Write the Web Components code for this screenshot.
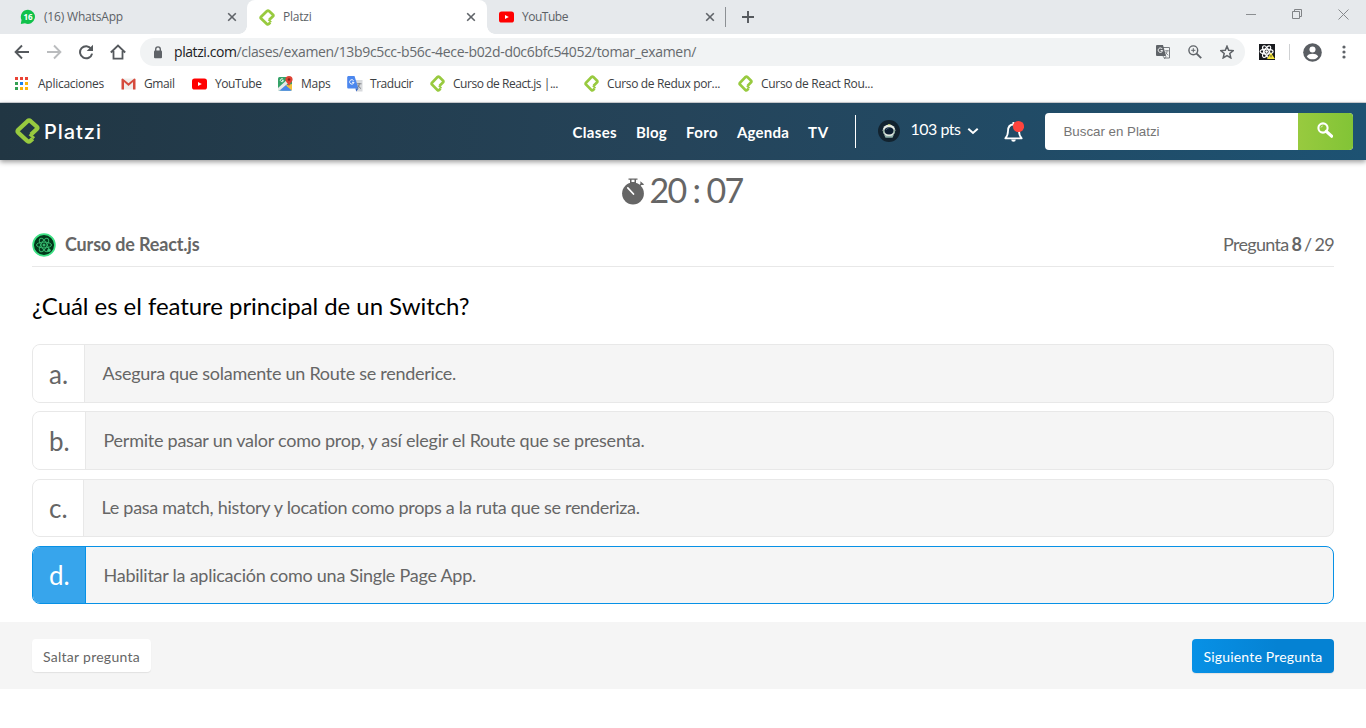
<!DOCTYPE html>
<html lang="es"><head><meta charset="utf-8"><title>Platzi</title>
<style>
body{margin:0;background:#fff;overflow:hidden;font-family:"Lato",sans-serif}
</style></head><body>
<exam-page></exam-page>
<script>
const make=(name,html,setup)=>customElements.define(name,class extends HTMLElement{
  connectedCallback(){
    if(this.shadowRoot)return;
    const t=document.createElement('template');t.innerHTML=html;
    this.attachShadow({mode:'open'}).append(t.content.cloneNode(true));
    if(setup)setup(this,this.shadowRoot);
  }
});

/* Single line label whose tracking is tuned to a given width */
make('fit-text',`<style>:host{display:block;white-space:nowrap;flex:none}span{display:inline-block}</style><span><slot></slot></span>`,(el,r)=>{
  const s=r.querySelector('span'),w=+el.getAttribute('w');
  if(!w)return;
  const n=el.textContent.length,nat=s.getBoundingClientRect().width;
  s.style.letterSpacing=((w-nat)/n).toFixed(3)+'px';
  el.style.width=w+'px';
});

const atom=c=>`<g fill="none" stroke="${c}"><ellipse cx="12" cy="12" rx="7.5" ry="2.9"/><ellipse cx="12" cy="12" rx="7.5" ry="2.9" transform="rotate(60 12 12)"/><ellipse cx="12" cy="12" rx="7.5" ry="2.9" transform="rotate(120 12 12)"/></g><circle cx="12" cy="12" r="1.5" fill="${c}"/>`;
const ICONS={
  platzi:['0 0 24 26','<path d="M15.400 16.400L21 11Q22.100 9.900 21 8.800L15 3.200Q13.500 1.900 12 3.200L3.200 11.700Q1.900 13.200 3.200 14.700L11.800 22.900Q13.300 24.200 14.600 23L17 20.800" fill="none" stroke="#98ca3f" stroke-width="4.200" stroke-linejoin="round"/><path d="M14 16.200l4.400 4" stroke="#98ca3f" stroke-width="2.600"/>'],
  whatsapp:['0 0 16 16','<path d="M8 .7a7.1 7.1 0 1 1-3 13.6L.8 15.1 1.5 11A7.2 7.2 0 0 1 8 .7z" fill="#0fc14a"/><text x="8" y="11" font-family="Open Sans,sans-serif" font-weight="700" font-size="8" fill="#fff" text-anchor="middle">16</text>'],
  youtube:['0 0 15 12','<rect y=".5" width="15" height="11" rx="2.6" fill="#f00"/><path d="M6 3.9v4.2L9.8 6z" fill="#fff"/>'],
  close:['0 0 10 10','<path d="M1.2 1.2l7.6 7.6M8.8 1.2L1.2 8.8" stroke="#5f6368" stroke-width="1.6"/>'],
  plus:['0 0 12 12','<path d="M6 0v12M0 6h12" stroke="#55595d" stroke-width="1.9"/>'],
  back:['0 0 16 16','<path d="M15 8H2M8 1.5L1.6 8 8 14.5" fill="none" stroke="#55595d" stroke-width="1.9"/>'],
  fwd:['0 0 16 16','<path d="M1 8h13M8 1.5L14.4 8 8 14.5" fill="none" stroke="#babcbe" stroke-width="1.9"/>'],
  reload:['0 0 16 16','<path d="M13.2 4.8A6.1 6.1 0 1 0 14.1 9.6" fill="none" stroke="#55595d" stroke-width="2"/><path d="M15 .8v6.3H8.7z" fill="#55595d"/>'],
  home:['0 0 16 16','<path d="M.8 8.5L8 1.5l7.2 7M3.5 7v7.7h9V7" fill="none" stroke="#55595d" stroke-width="1.8"/>'],
  lock:['0 0 10 13','<rect x="1" y="4.6" width="8" height="7.6" rx="1" fill="#5f6368"/><path d="M2.7 5V3.2a2.3 2.3 0 0 1 4.6 0V5" fill="none" stroke="#5f6368" stroke-width="1.4"/>'],
  min:['0 0 10 10','<path d="M0 5.5h10" stroke="#8b8e91"/>'],
  max:['0 0 10 10','<path d="M.5 2.5h7v7h-7zM2.5 2.5v-2h7v7h-2" fill="none" stroke="#808386"/>'],
  x:['0 0 11 11','<path d="M.5.5l10 10M10.5.5L.5 10.5" stroke="#85888b"/>'],
  trgray:['0 0 14 14','<path d="M5.5 2.5h8v10.5H8" fill="none" stroke="#777b7f"/><path d="M1 0h6l3 11H1a1 1 0 0 1-1-1V1a1 1 0 0 1 1-1z" fill="#5f6368"/><path d="M6.3 4A2.2 2.2 0 1 0 6.6 5.6H4.6" fill="none" stroke="#fff"/><path d="M9 5.8h4M11 5v1c0 2-1 3.3-2 4M9.6 7c.6 1.500 1.500 2.500 2.700 3.200M7 11l1.600 2.700 1.600-2.700" fill="none" stroke="#777b7f" stroke-width=".8"/>'],
  zoom:['0 0 14 14','<circle cx="5.3" cy="5.300" r="4.400" fill="none" stroke="#5f6368" stroke-width="1.400"/><path d="M8.600 8.600l4.600 4.600" stroke="#5f6368" stroke-width="1.900"/><path d="M5.300 3.200v4.200M3.200 5.300h4.200" stroke="#5f6368"/>'],
  star:['0 0 14 14','<path d="M7 1.200l1.700 4 4.500.400-3.400 2.900 1 4.400L7 10.600l-3.800 2.300 1-4.400L.8 5.600l4.500-.400z" fill="none" stroke="#5f6368" stroke-width="1.500"/>'],
  reactext:['0 0 24 24','<rect width="24" height="24" fill="#191b1f"/><g transform="translate(-4.200 -4.200) scale(1.300)" stroke-width="1.300">'+atom('#fff')+'</g><path d="M18 13l6 9.500H12z" fill="#f5e53b"/><path d="M18 16.500v3.500" stroke="#333" stroke-width="1.200"/>'],
  user:['0 0 20 20','<circle cx="10" cy="10" r="9.800" fill="#5a5e63"/><circle cx="10" cy="6.900" r="3.200" fill="#fff"/><path d="M4 14.200c1-2.300 3.800-3 6-3s5 .700 6 3c-1.400 2-3.500 3-6 3s-4.600-1-6-3z" fill="#fff"/>'],
  dots:['0 0 4 14','<g fill="#5f6368"><circle cx="2" cy="2" r="1.600"/><circle cx="2" cy="7" r="1.600"/><circle cx="2" cy="12" r="1.600"/></g>'],
  apps:['0 0 13 13','<path d="M0 0h3v3H0zM5 0h3v3H5zM10 0h3v3h-3z" fill="#ea4335"/><path d="M0 5h3v3H0z" fill="#34a053"/><path d="M5 5h3v3H5z" fill="#1a82f0"/><path d="M10 5h3v3h-3zM5 10h3v3H5zM10 10h3v3h-3z" fill="#fbb40a"/><path d="M0 10h3v3H0z" fill="#34a053"/>'],
  gmail:['0 0 15 12','<path d="M1 .5h13v11H1z" fill="#f0eeec"/><path d="M.500 1v10.500h2.500V4L7.500 8l4.500-4v7.500h2.500V1L13.300.500 7.500 5.200 1.700.500z" fill="#d54b3d"/>'],
  maps:['0 0 15 15','<rect y="1" width="14" height="13.500" rx="1.500" fill="#35a268"/><path d="M1 14.500L8 7.500l6 6.500-1 .500z" fill="#4a86e8"/><path d="M0 12L12 1h2v3L1.500 14.500 0 14z" fill="#e8e9e8"/><path d="M7.500 9.500l6.500 5V8z" fill="#f2c13c"/><path d="M3 14.500l5-5 5 5z" fill="#4a86e8"/><path d="M5.200 3.400A1.500 1.500 0 1 0 5.400 4.600H4" fill="none" stroke="#fff" stroke-width=".900"/><path d="M11 0a3.600 3.600 0 0 1 3.600 3.600C14.600 6 12 7 11 10.500 10 7 7.400 6 7.400 3.600A3.600 3.600 0 0 1 11 0z" fill="#e04335"/><circle cx="11" cy="3.500" r="1.300" fill="#8e2018"/>'],
  translate:['0 0 16 16','<path d="M7 4h8.500v11.500H9z" fill="#d8dadd"/><path d="M1 0h6.500l4 12.500H1.200a1 1 0 0 1-1-1V1z" fill="#4c87ee"/><path d="M6.600 4.600A2.200 2.200 0 1 0 7 6.300H5" fill="none" stroke="#fff"/><path d="M8.500 12.500h3L9.300 15.500z" fill="#3264c8"/><path d="M10 7.800h4.500M12.200 7v1c0 2-.700 3.300-2 4.300M11 9c.500 1.500 1.500 2.800 3 3.500" fill="none" stroke="#777b80" stroke-width=".900"/>'],
  avatar:['0 0 22 22','<circle cx="11" cy="11" r="11" fill="#12232f"/><path d="M6 14.500h10l-1.500 3.300h-7z" fill="#8fb0aa"/><ellipse cx="11" cy="10.300" rx="6.300" ry="5.800" fill="#e5ebe4"/><path d="M5 9.500h1.500v4H5zM15.500 9.500H17v4h-1.500z" fill="#8ead9e"/><ellipse cx="11" cy="10.800" rx="4.500" ry="3.600" fill="#0b1d30"/><path d="M8 10c.500-1.200 1.500-1.700 2.500-1.800" stroke="#557083" stroke-width=".800" fill="none"/><path d="M10 4.800h2.500" stroke="#c5d26e"/>'],
  chev:['0 0 12 8','<path d="M1.300 1.800L6 6l4.700-4.200" fill="none" stroke="#fff" stroke-width="2"/>'],
  bell:['0 0 20 23','<path d="M1.300 18.300C3 16.500 4 14.700 4 11 4 7.200 6 4.500 9.500 4.500S15 7.200 15 11c0 3.700 1 5.500 2.700 7.300z" fill="none" stroke="#fff" stroke-width="1.800" stroke-linejoin="round"/><path d="M9.500 2v2.500" stroke="#fff" stroke-width="2"/><path d="M7.200 19.500a2.300 2.300 0 0 0 4.600 0z" fill="#fff"/><circle cx="14.500" cy="6.500" r="5.600" fill="#ff443d"/>'],
  search:['0 0 16 16','<circle cx="6" cy="6" r="4.600" fill="none" stroke="#fff" stroke-width="2.100"/><path d="M9.300 9.300l5.300 4.900" stroke="#fff" stroke-width="3.200" stroke-linecap="round"/><path d="M4 5.500c.200-.900.900-1.400 1.700-1.500" fill="none" stroke="#fff" stroke-width=".700"/>'],
  timer:['0 0 23 27','<circle cx="11" cy="15.500" r="10.900" fill="#666"/><path d="M6.500.500h9v1.300h-9zM8 1.500h1.500v4H8zM12.500 1.500H14v4h-1.500z" fill="#666"/><path d="M8.500 4h5v2h-5z" fill="#666"/><path d="M18.400 3.300l3.800 3.300-1.300.500-1.500-.200-1 1-1-.900 1-1.200z" fill="#666"/><path d="M5.800 9.800l5.700 6.200" stroke="#fff" stroke-width="1.700" stroke-linecap="round"/>'],
  course:['0 0 24 24','<circle cx="12" cy="12" r="10.900" fill="#02381a" stroke="#3de284" stroke-width="1.700"/><g stroke-width="1">'+atom('#35b56c')+'</g><circle cx="17" cy="17.300" r="1.700" fill="#3fc47b"/>']
};
make('ui-icon','<style>:host{display:block;flex:none}svg{display:block;width:100%;height:100%}</style><svg preserveAspectRatio="none"></svg>',(el,r)=>{
  const [vb,body]=ICONS[el.getAttribute('name')],s=r.querySelector('svg');
  s.setAttribute('viewBox',vb);s.innerHTML=body;
  el.style.width=el.getAttribute('w')+'px';el.style.height=el.getAttribute('h')+'px';
});

make('browser-tab',`<style>
:host{display:flex;align-items:center;box-sizing:border-box;height:34px;padding:0 10px 0 20px;color:#5c6166;font:12px/16px "Open Sans",sans-serif}
:host([active]){background:#fff;border-radius:8px 8px 0 0;position:relative;padding:0 11px 0 12px}
:host([active])::before,:host([active])::after{content:"";position:absolute;bottom:0;width:8px;height:8px}
:host([active])::before{left:-8px;background:radial-gradient(circle at 0 0,transparent 7.5px,#fff 8px)}
:host([active])::after{right:-8px;background:radial-gradient(circle at 100% 0,transparent 7.5px,#fff 8px)}
.t{flex:1;padding-left:8px}</style><slot name="icon"></slot><div class="t"><slot></slot></div><ui-icon name="close" w="10" h="10"></ui-icon>`);

make('browser-tabs',`<style>:host{display:flex;height:34px;background:#e6e9ec;align-items:center}
.sep{width:1px;height:20px;background:#8c9094;margin:0 16px 0 -1px}.sp{flex:1}.win{display:flex;align-items:center;gap:36px;padding:0 17px 6px 0}
</style>
<browser-tab style="width:247px"><ui-icon slot="icon" name="whatsapp" w="16" h="16"></ui-icon><fit-text w="79">(16) WhatsApp</fit-text></browser-tab>
<browser-tab active style="width:240px"><ui-icon slot="icon" name="platzi" w="16" h="17"></ui-icon><fit-text w="28.500">Platzi</fit-text></browser-tab>
<browser-tab style="width:239px;padding:0 11px 0 12px"><ui-icon slot="icon" name="youtube" w="15" h="12"></ui-icon><fit-text w="46">YouTube</fit-text></browser-tab>
<div class="sep"></div><ui-icon name="plus" w="12" h="12"></ui-icon><div class="sp"></div>
<div class="win"><ui-icon name="min" w="10" h="10"></ui-icon><ui-icon name="max" w="10" h="10"></ui-icon><ui-icon name="x" w="11" h="11"></ui-icon></div>`);

make('browser-toolbar',`<style>:host{display:flex;align-items:center;height:36px;box-sizing:border-box;padding:0 19px 0 14px;font:14px/20px "Open Sans",sans-serif;color:#666a6e}
.nav{display:flex;gap:16px;width:126px}.url{display:flex;align-items:center;height:28px;box-sizing:border-box;width:1105px;border-radius:14px;background:#f1f3f4;padding:0 11px 0 13px}
.addr{display:flex;margin-left:11px;flex:1}.addr .host{color:#202124}.acts{display:flex;align-items:center;gap:18px}
.sep{width:1px;height:16px;background:#cfd1d3;margin:0 13px 0 14px}</style>
<div class="nav"><ui-icon name="back" w="16" h="16"></ui-icon><ui-icon name="fwd" w="16" h="16"></ui-icon><ui-icon name="reload" w="16" h="16"></ui-icon><ui-icon name="home" w="16" h="16"></ui-icon></div>
<div class="url"><ui-icon name="lock" w="10" h="13"></ui-icon><div class="addr"><fit-text class="host" w="62.500">platzi.com</fit-text><fit-text w="459.500">/clases/examen/13b9c5cc-b56c-4ece-b02d-d0c6bfc54052/tomar_examen/</fit-text></div>
<div class="acts"><ui-icon name="trgray" w="14" h="14"></ui-icon><ui-icon name="zoom" w="14" h="14"></ui-icon><ui-icon name="star" w="14" h="14"></ui-icon></div></div>
<ui-icon name="reactext" w="16" h="16" style="margin-left:14px"></ui-icon><div class="sep"></div><ui-icon name="user" w="19" h="19"></ui-icon><ui-icon name="dots" w="4" h="14" style="margin-left:20px"></ui-icon>`);

make('bookmark-link',`<style>:host{display:flex;align-items:center;font:12px/16px "Open Sans",sans-serif;color:#3c4043;flex:none}.i{width:23px;flex:none}</style><div class="i"><slot name="icon"></slot></div><slot></slot>`);
const marks=[['apps',13,13,'Aplicaciones',66,106],['gmail',15,12,'Gmail',30.5,71],['youtube',15,12,'YouTube',46.5,86],['maps',15,15,'Maps',29.5,69],['translate',16,16,'Traducir',43,83],['platzi',15,17,'Curso de React.js |...',105,154],['platzi',15,17,'Curso de Redux por...',113,154],['platzi',15,17,'Curso de React Rou...',112,140]];
make('bookmark-bar',`<style>:host{display:flex;height:33px;box-sizing:border-box;padding:0 0 5px 15px;border-bottom:1px solid #d2d5d9}</style>`+marks.map(m=>`<bookmark-link style="width:${m[5]}px"><ui-icon slot="icon" name="${m[0]}" w="${m[1]}" h="${m[2]}"></ui-icon><fit-text w="${m[4]}">${m[3]}</fit-text></bookmark-link>`).join(''));

make('site-header',`<style>:host{display:flex;align-items:center;height:57px;box-sizing:border-box;padding:0 13px 0 15px;background:linear-gradient(to right,#213643,#25445a 50%,#1d5272);box-shadow:0 2px 5px rgba(0,0,0,.4);color:#fff;font:700 15px/20px Lato,sans-serif;position:relative}
.brand{font:500 20px/26px Inter,sans-serif;margin:0 0 0 4px}.sp{flex:1}nav{display:flex;gap:19px;padding-top:1px}
.sep{width:1px;height:33px;background:#fff;margin:0 22px 0 26px}.pts{font-weight:400;font-size:16px;margin:0 6px 5px 10.500px}
.search{display:flex;width:308px;height:37px;border-radius:4px;overflow:hidden;background:#fff;margin-left:21px}
.field{flex:1;padding:10px 0 0 18.500px;font:13.330px/18px "Liberation Sans",sans-serif;color:#757575}.go{width:55px;background:linear-gradient(to right,#98ca3f,#82c436);display:flex;justify-content:center;padding:9px 2px 0 0;box-sizing:border-box}</style>
<ui-icon name="platzi" w="25" h="26" style="margin-bottom:2px"></ui-icon><fit-text class="brand" w="58">Platzi</fit-text><div class="sp"></div>
<nav><fit-text w="44.500">Clases</fit-text><fit-text w="31">Blog</fit-text><fit-text w="32">Foro</fit-text><fit-text w="52">Agenda</fit-text><fit-text w="21">TV</fit-text></nav>
<div class="sep"></div><ui-icon name="avatar" w="22" h="22" style="margin-bottom:1px"></ui-icon><fit-text class="pts" w="50">103 pts</fit-text><ui-icon name="chev" w="12" h="8" style="margin-bottom:1px"></ui-icon>
<ui-icon name="bell" w="20" h="23" style="margin-left:25.500px;margin-bottom:1px"></ui-icon>
<div class="search"><div class="field"><fit-text w="96">Buscar en Platzi</fit-text></div><div class="go"><ui-icon name="search" w="16" h="16"></ui-icon></div></div>`);

make('exam-timer',`<style>:host{display:flex;height:62px;box-sizing:border-box;padding:10px 0 0 622px;align-items:flex-start;color:#666;font:34px/40px Lato,sans-serif}fit-text{margin-left:4.500px}ui-icon{margin-top:8px}</style><ui-icon name="timer" w="23" h="27"></ui-icon><fit-text w="93">20 : 07</fit-text>`);

make('course-bar',`<style>:host{display:flex;align-items:center;height:45px;box-sizing:border-box;margin:0 32px;padding-bottom:1px;border-bottom:1px solid #e8e8e8;color:#666;font:18px/24px Lato,sans-serif}.name{font-weight:700;margin-left:9px;flex:1}.q{word-spacing:-1px}b{font-weight:700}</style>
<ui-icon name="course" w="24" h="24" style="margin-top:2px"></ui-icon><div class="name"><fit-text w="134.500">Curso de React.js</fit-text></div><fit-text class="q" w="111">Pregunta <b>8</b> / 29</fit-text>`);

make('answer-option',`<style>:host{display:flex;box-sizing:border-box;border:1px solid #e8e8e8;border-radius:8px;background:#f5f5f5;overflow:hidden;color:#666;font:18px/24px Lato,sans-serif}
.l{background:#fff;border-right:1px solid #e8e8e8;box-sizing:border-box;padding:13px 0 0 16px;font-size:26px;line-height:32px;flex:none}
.t{padding:16px 0 0 17.500px}:host([letter="c."]) .t{padding-top:15px}:host([letter="c."]) .l,:host([selected]) .l{padding-top:12px}
:host([selected]){border-color:#0791e6}:host([selected]) .l{background:#37a5ec;border-color:#0791e6;color:#fff}</style>
<div class="l"></div><div class="t"><slot></slot></div>`,(el,r)=>{const l=r.querySelector('.l');l.textContent=el.getAttribute('letter');l.style.width=el.getAttribute('lw')+'px'});

make('question-block',`<style>:host{display:block;padding:22px 32px 0;height:355px;box-sizing:border-box}
h1{margin:0;color:#000;font:400 24px/34px Lato,sans-serif}.list{display:grid;grid-template-rows:59px 8px 59px 9px 58px 9px 58px;padding-top:21px}</style>
<h1><fit-text w="437.500">¿Cuál es el feature principal de un Switch?</fit-text></h1>
<div class="list">
<answer-option letter="a." lw="52"><fit-text w="353.500">Asegura que solamente un Route se renderice.</fit-text></answer-option><i></i>
<answer-option letter="b." lw="53"><fit-text w="541">Permite pasar un valor como prop, y así elegir el Route que se presenta.</fit-text></answer-option><i></i>
<answer-option letter="c." lw="51"><fit-text w="538.500">Le pasa match, history y location como props a la ruta que se renderiza.</fit-text></answer-option><i></i>
<answer-option letter="d." lw="53" selected><fit-text w="372.500">Habilitar la aplicación como una Single Page App.</fit-text></answer-option></div>`);

make('action-button',`<style>:host{display:flex;box-sizing:border-box;justify-content:center;height:33px;width:119px;padding-top:8px;border-radius:4px;background:#fff;color:#666;font:14px/20px Lato,sans-serif;box-shadow:0 1px 1px rgba(0,0,0,.08)}
:host([primary]){width:142px;height:34px;background:linear-gradient(to right,#0791e6,#0582d3 60%);color:#fff}</style><slot></slot>`);
make('exam-footer',`<style>:host{display:flex;justify-content:space-between;height:67px;box-sizing:border-box;padding:17px 32px;background:#f5f5f5}</style>
<action-button><fit-text w="97">Saltar pregunta</fit-text></action-button><action-button primary><fit-text w="119">Siguiente Pregunta</fit-text></action-button>`);
make('exam-page',`<style>:host{display:block;width:1366px;height:728px;overflow:hidden}</style><browser-tabs></browser-tabs><browser-toolbar></browser-toolbar><bookmark-bar></bookmark-bar><site-header></site-header><main><exam-timer></exam-timer><course-bar></course-bar><question-block></question-block></main><exam-footer></exam-footer>`);
</script></body></html>
